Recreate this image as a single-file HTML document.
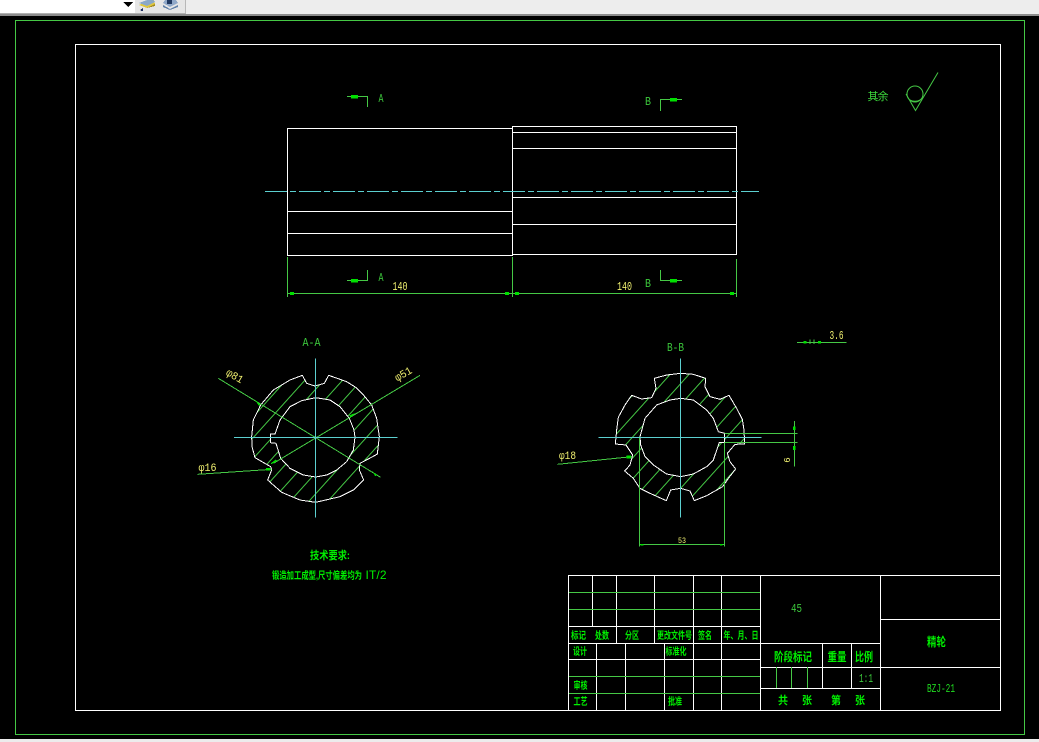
<!DOCTYPE html>
<html lang="zh">
<head>
<meta charset="utf-8">
<title>CAD</title>
<style>
html,body{margin:0;padding:0;width:1039px;height:742px;overflow:hidden;background:#000}
svg{position:absolute;left:0;top:0;display:block}
text{font-family:"Liberation Sans","Noto Sans CJK SC",sans-serif}
path,line,rect{shape-rendering:crispEdges}
.w{stroke:#fff;stroke-width:1;fill:none}
.g{stroke:#45c845;stroke-width:1;fill:none}
.c{stroke:#5cd0d0;stroke-width:1;fill:none}
.lb{fill:#00f000;font-size:10px;font-weight:700;text-anchor:middle}
.lc{fill:#00f000;font-size:11px;font-weight:700;text-anchor:middle}
.d{fill:#3cc83c;font-family:"Liberation Mono",monospace;font-size:12px;text-anchor:middle}
.y{fill:#f0f070;font-family:"Liberation Mono",monospace;font-size:11px;text-anchor:middle}
.a{fill:#00e000}
</style>
</head>
<body>
<svg width="1039" height="742" viewBox="0 0 1039 742" xmlns="http://www.w3.org/2000/svg">
<defs>
<pattern id="h" patternUnits="userSpaceOnUse" width="42" height="42" patternTransform="rotate(-48)">
<line x1="0" y1="21" x2="42" y2="21" stroke="#45c845" stroke-width="3"/>
</pattern>
</defs>
<rect width="1039" height="742" fill="#000"/>
<!-- toolbar -->
<rect x="0" y="0" width="1039" height="14" fill="#ededed"/>
<rect x="0" y="0" width="135" height="13" fill="#fff"/>
<rect x="135" y="0" width="51" height="13" fill="#e6e6e6"/>
<rect x="185" y="0" width="1" height="14" fill="#b8b8b8"/>
<rect x="0" y="13" width="186" height="1" fill="#b0b0b0"/>
<rect x="0" y="14" width="1039" height="2" fill="#8c8c8c"/>
<path d="M123 2h10l-5 5z" fill="#000"/>
<path d="M139 5l9-5h6l1 4-8 4z" fill="#e0c840"/>
<path d="M139 3l8-3h6l2 2-8 4z" fill="#8aa8c8"/>
<path d="M140 6l7 2 8-4v2l-8 2z" fill="#a08820"/>
<path d="M140 10l3-2v3h-2z" fill="#203060"/>
<path d="M163 3l7 4 8-4-2-3h-11z" fill="#90a8c8"/>
<path d="M163 5l7 4 8-4v2l-8 3-7-3z" fill="#6080a8"/>
<path d="M167 0h5v4h-5z" fill="#203860"/>
<!-- bottom strip -->
<rect x="0" y="739" width="1039" height="3" fill="#ececec"/>
<!-- frames -->
<rect x="15.500" y="20.500" width="1009" height="714" class="g"/>
<rect x="75.500" y="44.500" width="925" height="666" class="w"/>
<!-- front views -->
<g class="w">
<rect x="287.500" y="128.500" width="225" height="127"/>
<path d="M288 211.500H512M288 233.500H512"/>
<rect x="512.500" y="126.500" width="224" height="128"/>
<path d="M513 132.500H736M513 148.500H736M513 197.500H736M513 224.500H736"/>
</g>
<line x1="265" y1="191.500" x2="759" y2="191.500" class="c" stroke-dasharray="22 3 6 3"/>
<!-- section marks -->
<g class="g">
<path d="M347 96.500H367.500V107"/>
<path d="M347 280.500H367.500V270"/>
<path d="M682 99.500H660.500V111"/>
<path d="M682 280.500H660.500V270"/>
<path d="M287.500 257V297M512.500 257V297M736.500 259V297M287 293.500H737"/>
</g>
<g class="a">
<rect x="351" y="95" width="7" height="3.500"/>
<rect x="351" y="279" width="7" height="3.500"/>
<rect x="670" y="98" width="7" height="3.500"/>
<rect x="670" y="279" width="7" height="3.500"/>
<rect x="290" y="292" width="4" height="3"/>
<rect x="505" y="292" width="4" height="3"/>
<rect x="515" y="292" width="4" height="3"/>
<rect x="730" y="292" width="4" height="3"/>
</g>
<text x="381" y="102" class="d" textLength="5" lengthAdjust="spacingAndGlyphs">A</text>
<text x="381" y="281" class="d" textLength="5" lengthAdjust="spacingAndGlyphs">A</text>
<text x="648" y="105" class="d" textLength="6" lengthAdjust="spacingAndGlyphs">B</text>
<text x="648" y="287" class="d" textLength="6" lengthAdjust="spacingAndGlyphs">B</text>
<text x="400" y="290" class="y" style="font-size:12px" textLength="15" lengthAdjust="spacingAndGlyphs">140</text>
<text x="624.500" y="290" class="y" style="font-size:12px" textLength="15" lengthAdjust="spacingAndGlyphs">140</text>
<!-- surface mark -->
<text x="878" y="100" fill="#3cd83c" font-size="11" font-weight="400" text-anchor="middle" textLength="21">其余</text>
<circle cx="915" cy="94" r="8" class="g"/>
<path d="M906 94L915.500 110.500L938 72.500M909 99.500Q915 103 921 99.500" class="g" style="shape-rendering:auto"/>
<!-- Section A-A -->
<text x="311.500" y="346" class="d" textLength="18" lengthAdjust="spacingAndGlyphs">A-A</text>
<g transform="translate(190 330) scale(.33333)">
<path style="shape-rendering:auto" fill="url(#h)" fill-rule="evenodd" d="M337 136L350 160L375 168L403 160L416 136L470 155L497 172L522 197L545 225L560 265L568 320L562 372L548 380L510 400L508 420L521 450L490 480L450 500L377 517L330 510L275 487L233 450L245 420L242 410L195 383L186 350L185 320L190 270L212 225L250 180L300 150ZM377 203L335 212L300 230L270 270L255 312L241 312L241 338L258 340L272 385L300 415L340 435L377 441L410 435L440 420L470 395L490 360L495 322L492 300L478 265L450 230L420 210Z"/>
<path fill="none" stroke="#fff" stroke-width="3" d="M337 136L350 160L375 168L403 160L416 136L470 155L497 172L522 197L545 225L560 265L568 320L562 372L548 380L510 400L508 420L521 450L490 480L450 500L377 517L330 510L275 487L233 450L245 420L242 410L195 383L186 350L185 320L190 270L212 225L250 180L300 150ZM377 203L335 212L300 230L270 270L255 312L241 312L241 338L258 340L272 385L300 415L340 435L377 441L410 435L440 420L470 395L490 360L495 322L492 300L478 265L450 230L420 210Z"/>
<g stroke="#45c845" stroke-width="3" fill="none">
<path d="M85 145L572 442"/>
<path d="M690 136L250 400"/>
<path d="M22 433L245 418"/>
</g>
<g stroke="#5cd0d0" stroke-width="3" fill="none">
<path d="M132 322H623M377 85V563"/>
</g>
<g fill="#00e000">
<path d="M195 210l16 14-4 4z"/>
<path d="M548 425l12 10-4 4z"/>
<path d="M498 248l-16 14-4-6z"/>
<path d="M258 388l-16 12 2 2 16-8z"/>
<rect x="228" y="414" width="14" height="8"/>
</g>
</g>
<text transform="translate(233 379) rotate(30)" class="y" textLength="18" lengthAdjust="spacingAndGlyphs">&#966;81</text>
<text transform="translate(405 377) rotate(-30)" class="y" textLength="18" lengthAdjust="spacingAndGlyphs">&#966;51</text>
<text x="207.500" y="471" class="y" textLength="18" lengthAdjust="spacingAndGlyphs">&#966;16</text>
<!-- Section B-B -->
<text x="675.500" y="351" class="d" textLength="17" lengthAdjust="spacingAndGlyphs">B-B</text>
<g transform="translate(550 330) scale(.33333)">
<path style="shape-rendering:auto" fill="url(#h)" fill-rule="evenodd" d="M313 145L350 135L392 130L430 133L467 145L465 170L480 200L510 208L537 196L560 235L577 268L582 300L584 342L555 343L532 370L540 395L557 417L535 445L518 470L470 497L433 512L420 483L392 475L362 480L349 512L300 490L270 475L250 445L224 423L240 405L248 375L228 345L196 342L200 300L205 262L225 225L245 196L275 207L305 203L318 175ZM392 205L360 210L320 225L285 265L270 320L272 345L285 380L310 405L350 432L392 440L430 432L470 410L490 390L508 337L524 337L524 310L505 305L490 265L470 240L430 210Z"/>
<path fill="none" stroke="#fff" stroke-width="3" d="M313 145L350 135L392 130L430 133L467 145L465 170L480 200L510 208L537 196L560 235L577 268L582 300L584 342L555 343L532 370L540 395L557 417L535 445L518 470L470 497L433 512L420 483L392 475L362 480L349 512L300 490L270 475L250 445L224 423L240 405L248 375L228 345L196 342L200 300L205 262L225 225L245 196L275 207L305 203L318 175ZM392 205L360 210L320 225L285 265L270 320L272 345L285 380L310 405L350 432L392 440L430 432L470 410L490 390L508 337L524 337L524 310L505 305L490 265L470 240L430 210Z"/>
<g stroke="#45c845" stroke-width="3" fill="none">
<path d="M268 320V650M524 337V650M268 643H524"/>
<path d="M524 310H742M524 337H742M733 273V410"/>
<path d="M22 403L245 380"/>
<path d="M741 37H890M780 28V42M792 28V42"/>
</g>
<g stroke="#5cd0d0" stroke-width="3" fill="none">
<path d="M145 322H635M392 85V563"/>
</g>
<g fill="#00e000">
<rect x="229" y="377" width="14" height="8"/>
<rect x="729" y="290" width="8" height="10"/>
<rect x="729" y="348" width="8" height="12"/>
<rect x="760" y="33" width="9" height="7"/>
<rect x="804" y="33" width="9" height="7"/>
<rect x="272" y="642" width="8" height="4"/>
<rect x="510" y="642" width="8" height="4"/>
</g>
</g>
<text x="567.500" y="459" class="y" textLength="17" lengthAdjust="spacingAndGlyphs">&#966;18</text>
<text x="836.500" y="339" class="y" style="font-size:12px" textLength="14" lengthAdjust="spacingAndGlyphs">3.6</text>
<text x="682" y="543" class="y" style="font-size:8px" textLength="8" lengthAdjust="spacingAndGlyphs">53</text>
<text transform="translate(790 460) rotate(-90)" class="y" style="font-size:9px">6</text>
<!-- tech text -->
<text x="330" y="559" class="lc" style="font-size:11px" textLength="40" lengthAdjust="spacingAndGlyphs">技术要求:</text>
<text x="317" y="579" class="lb" style="font-size:10px" textLength="90" lengthAdjust="spacingAndGlyphs">锻造加工成型,尺寸偏差均为</text>
<text x="376" y="579" fill="#00f000" font-size="12" text-anchor="middle" textLength="21">IT/2</text>
<!-- title block -->
<g class="w">
<path d="M568.500 575.500H1000.500V710.500H568.500Z"/>
<path d="M592.500 575V626.500M616.500 575V643M654.500 575V643M693.500 575V710M721.500 575V710M760.500 575V710"/>
<path d="M569 626.500H760M569 643.500H880M569 659.500H760"/>
<path d="M596.500 643V710M625.500 643V710M664.500 643V710"/>
<path d="M880.500 575V710M881 619.500H1000M760 667.500H1000M760 688.500H880"/>
<path d="M822.500 643V688M851.500 643V688"/>
</g>
<g class="g">
<path d="M569 592.500H760M569 609.500H760M569 676.500H760M569 693.500H760"/>
<path d="M776.500 667V688M791.500 667V688M807.500 667V688"/>
</g>
<g class="lb">
<text x="578.500" y="639" textLength="15" lengthAdjust="spacingAndGlyphs">标记</text>
<text x="602" y="639" textLength="14" lengthAdjust="spacingAndGlyphs">处数</text>
<text x="632" y="639" textLength="14" lengthAdjust="spacingAndGlyphs">分区</text>
<text x="674.500" y="639" textLength="35" lengthAdjust="spacingAndGlyphs">更改文件号</text>
<text x="705" y="639" textLength="14" lengthAdjust="spacingAndGlyphs">签名</text>
<text x="741" y="639" textLength="35" lengthAdjust="spacingAndGlyphs">年、月、日</text>
<text x="580" y="655" textLength="14" lengthAdjust="spacingAndGlyphs">设计</text>
<text x="676" y="655" textLength="21" lengthAdjust="spacingAndGlyphs">标准化</text>
<text x="580.500" y="689" textLength="14" lengthAdjust="spacingAndGlyphs">审核</text>
<text x="580.500" y="705" textLength="14" lengthAdjust="spacingAndGlyphs">工艺</text>
<text x="675" y="705" textLength="14" lengthAdjust="spacingAndGlyphs">批准</text>
</g>
<g class="lc">
<text x="793" y="661" style="font-size:12px" textLength="38" lengthAdjust="spacingAndGlyphs">阶段标记</text>
<text x="837" y="661" style="font-size:12px" textLength="19" lengthAdjust="spacingAndGlyphs">重量</text>
<text x="864" y="661" style="font-size:12px" textLength="18" lengthAdjust="spacingAndGlyphs">比例</text>
<text x="783" y="704" textLength="10" lengthAdjust="spacingAndGlyphs">共</text>
<text x="807" y="704" textLength="10" lengthAdjust="spacingAndGlyphs">张</text>
<text x="836" y="704" textLength="10" lengthAdjust="spacingAndGlyphs">第</text>
<text x="860" y="704" textLength="10" lengthAdjust="spacingAndGlyphs">张</text>
<text x="936.500" y="646" style="font-size:12px" textLength="19" lengthAdjust="spacingAndGlyphs">精轮</text>
</g>
<text x="796.500" y="612" class="d" textLength="11" lengthAdjust="spacingAndGlyphs">45</text>
<text x="866" y="682" class="d" textLength="14" lengthAdjust="spacingAndGlyphs">1:1</text>
<text x="941" y="692" class="d" style="fill:#20d820" textLength="28" lengthAdjust="spacingAndGlyphs">BZJ-21</text>
</svg>
</body>
</html>
